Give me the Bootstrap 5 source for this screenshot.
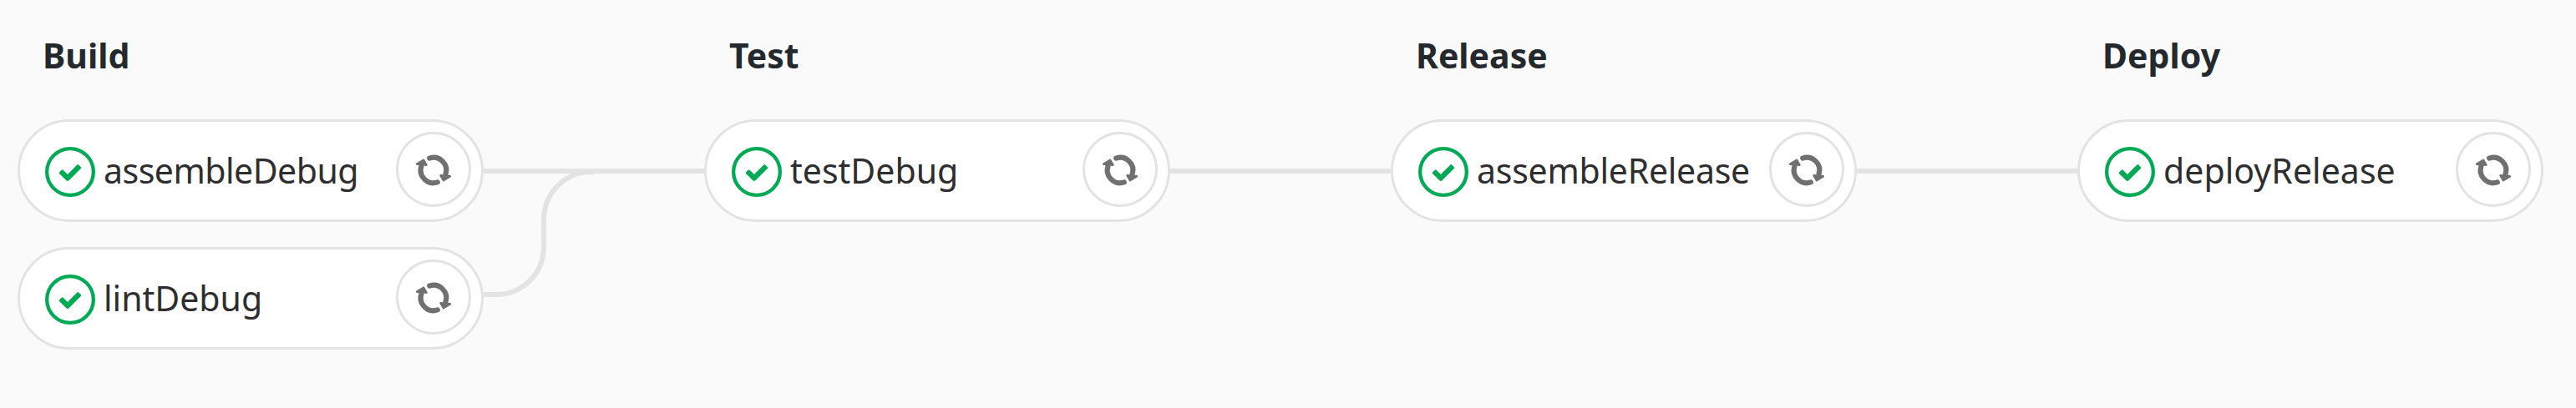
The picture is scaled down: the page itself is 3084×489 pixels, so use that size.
<!DOCTYPE html>
<html lang="en">
<head>
<meta charset="utf-8">
<title>Pipeline</title>
<link rel="stylesheet" href="https://cdn.jsdelivr.net/npm/bootstrap@5.3.0/dist/css/bootstrap.min.css">
<style>
body{background:#fafafa;font-family:"Noto Sans","Open Sans",sans-serif;font-size:41px;line-height:60px;color:#2e2e2e}
.pipeline{padding:36px 0 0 21px}
.stage-col{width:558px}
.stage-name{height:60px;margin:0 0 47px 30px;font-size:41px;line-height:60px;color:#24292d;white-space:nowrap}
.job{height:123px;border:3px solid #e3e3e3;padding:0 12px 0 30px}
.job + .job{margin-top:30px}
.job-name{margin:-1px 0 0 10px;white-space:nowrap}
.tight{letter-spacing:-.5px}
.tight-sm{letter-spacing:-.25px}
.loose{letter-spacing:.05px}
.ring{width:60px;height:60px;margin-top:3px}
.retry{width:90px;height:90px;border:3px solid #e3e3e3;margin-top:-3px}
.retry svg{width:48px;height:48px}
.link-col{width:264px;padding-top:166px}
.link-line{height:6px;background:#e3e3e3}
.link-col svg{width:132px;height:154px;margin-top:-6px}
</style>
</head>
<body>
<svg class="d-none">
<symbol id="ok" viewBox="0 0 14 14"><circle cx="7" cy="7" r="6.5" fill="none" stroke="#00aa55"/><path fill="#00aa55" d="M6.278 7.697L5.045 6.464a.296.296 0 0 0-.42-.002l-.613.614a.298.298 0 0 0 .002.42l1.91 1.909a.5.5 0 0 0 .703.005l.265-.265L9.997 6.04a.291.291 0 0 0-.009-.408l-.614-.614a.29.29 0 0 0-.408-.009L6.278 7.697z"/></symbol>
<symbol id="again" viewBox="-24 -25 48 48"><g id="half"><path d="M-4.8-14.4A15.2 15.2 0 0 1 14.6 4.5" fill="none" stroke="#707070" stroke-width="6.2" stroke-linecap="round"/><path d="M8.6 6.4L19.8 7.4L11.9 12.2Z" fill="#707070" stroke="#707070" stroke-width="2.6" stroke-linejoin="round"/></g><use href="#half" transform="rotate(180)"/></symbol>
</svg>
<main class="pipeline d-flex align-items-start">
  <section class="stage-col flex-shrink-0">
    <h2 class="stage-name fw-bold">Build</h2>
    <div class="job bg-white rounded-pill d-flex align-items-center"><svg class="ring"><use href="#ok"/></svg><span class="job-name tight">assembleDebug</span><span class="retry rounded-circle ms-auto d-flex align-items-center justify-content-center"><svg><use href="#again"/></svg></span></div>
    <div class="job bg-white rounded-pill d-flex align-items-center"><svg class="ring"><use href="#ok"/></svg><span class="job-name">lintDebug</span><span class="retry rounded-circle ms-auto d-flex align-items-center justify-content-center"><svg><use href="#again"/></svg></span></div>
  </section>
  <div class="link-col flex-shrink-0"><div class="link-line"></div><svg class="d-block" viewBox="0 0 132 154" fill="none" stroke="#e3e3e3" stroke-width="6"><path d="M0 151H15A57 57 0 0 0 72 94V61A57 57 0 0 1 129 4H132"/></svg></div>
  <section class="stage-col flex-shrink-0">
    <h2 class="stage-name fw-bold">Test</h2>
    <div class="job bg-white rounded-pill d-flex align-items-center"><svg class="ring"><use href="#ok"/></svg><span class="job-name">testDebug</span><span class="retry rounded-circle ms-auto d-flex align-items-center justify-content-center"><svg><use href="#again"/></svg></span></div>
  </section>
  <div class="link-col flex-shrink-0"><div class="link-line"></div></div>
  <section class="stage-col flex-shrink-0">
    <h2 class="stage-name fw-bold">Release</h2>
    <div class="job bg-white rounded-pill d-flex align-items-center"><svg class="ring"><use href="#ok"/></svg><span class="job-name tight-sm">assembleRelease</span><span class="retry rounded-circle ms-auto d-flex align-items-center justify-content-center"><svg><use href="#again"/></svg></span></div>
  </section>
  <div class="link-col flex-shrink-0"><div class="link-line"></div></div>
  <section class="stage-col flex-shrink-0">
    <h2 class="stage-name fw-bold loose">Deploy</h2>
    <div class="job bg-white rounded-pill d-flex align-items-center"><svg class="ring"><use href="#ok"/></svg><span class="job-name loose">deployRelease</span><span class="retry rounded-circle ms-auto d-flex align-items-center justify-content-center"><svg><use href="#again"/></svg></span></div>
  </section>
</main>
<script src="https://cdn.jsdelivr.net/npm/bootstrap@5.3.0/dist/js/bootstrap.bundle.min.js"></script>
</body>
</html>
